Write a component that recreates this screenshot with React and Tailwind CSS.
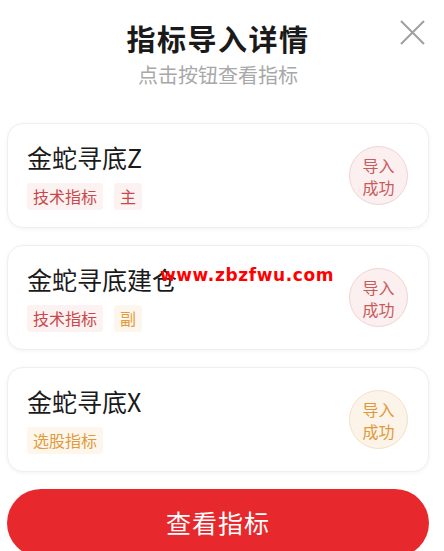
const FONT = { fontFamily: "'Noto Sans CJK SC', 'Noto Sans', sans-serif" };

const items = [
  { name: "金蛇寻底Z", tags: [{ label: "技术指标", tone: "red" }, { label: "主", tone: "red" }], tone: "red" },
  { name: "金蛇寻底建仓", tags: [{ label: "技术指标", tone: "red" }, { label: "副", tone: "orange" }], tone: "red" },
  { name: "金蛇寻底X", tags: [{ label: "选股指标", tone: "orange" }], tone: "orange" },
];

function Tag({ label, tone }) {
  const cls =
    tone === "red"
      ? "bg-[#fdf2f2] text-[#c9474a]"
      : "bg-[#fdf6ec] text-[#e39a3c]";
  return (
    <span className={`h-[27px] px-[6px] flex items-center text-[16px] leading-none rounded-[3px] ${cls}`}>
      {label}
    </span>
  );
}

function Badge({ tone }) {
  const cls =
    tone === "red"
      ? "bg-[#fcefef] border-[#f1d3d3] text-[#c95a5c]"
      : "bg-[#fdf4e9] border-[#f2e0c8] text-[#e0983a]";
  return (
    <div
      className={`w-[59px] h-[59px] rounded-full border flex flex-col items-center justify-center text-[16px] leading-[22px] ${cls}`}
    >
      <span>导入</span>
      <span>成功</span>
    </div>
  );
}

export default function App() {
  return (
    <div className="relative w-[444px] h-[551px] overflow-hidden bg-white" style={FONT}>
      <div className="relative flex flex-col items-center pt-[20px] pl-[7px] pr-[15px]">
        <h1 className="text-[29px] leading-[36px] font-bold text-[#1a1a1a] tracking-[1.5px]">指标导入详情</h1>
        <p className="mt-[6px] text-[20px] leading-[26px] text-[#a8a8a8]">点击按钮查看指标</p>
        <button className="absolute right-[19px] top-[20px] w-[25px] h-[25px] text-[#a0a0a0]">
          <svg viewBox="0 0 25 25" className="w-full h-full" fill="none" stroke="currentColor" strokeWidth="2">
            <path d="M1 1 L24 24 M24 1 L1 24" />
          </svg>
        </button>

        <div className="w-full mt-[35px] flex flex-col gap-[17px]">
          {items.map((it) => (
            <div
              key={it.name}
              className="h-[105px] rounded-[16px] border border-[#efefef] shadow-[0_1px_4px_rgba(0,0,0,0.05)] bg-white flex items-center pl-[19px] pr-[20px]"
            >
              <div className="flex-1 flex flex-col">
                <div className="text-[25px] leading-[30px] text-[#1a1a1a]">{it.name}</div>
                <div className="mt-[11px] flex gap-[11px]">
                  {it.tags.map((t) => (
                    <Tag key={t.label} {...t} />
                  ))}
                </div>
              </div>
              <Badge tone={it.tone} />
            </div>
          ))}
        </div>

        <button className="w-full mt-[17px] h-[68px] rounded-full bg-[#e7292d] text-white text-[25px] leading-none tracking-[1px] flex items-start justify-center pt-[21px]">
          查看指标
        </button>
      </div>

      <div
        className="absolute left-[160px] top-[264px] text-[#ff0000] text-[17px] font-bold tracking-[0.6px] leading-[22px]"
        style={{ fontFamily: "'DejaVu Sans', sans-serif" }}
      >
        www.zbzfwu.com
      </div>
    </div>
  );
}
